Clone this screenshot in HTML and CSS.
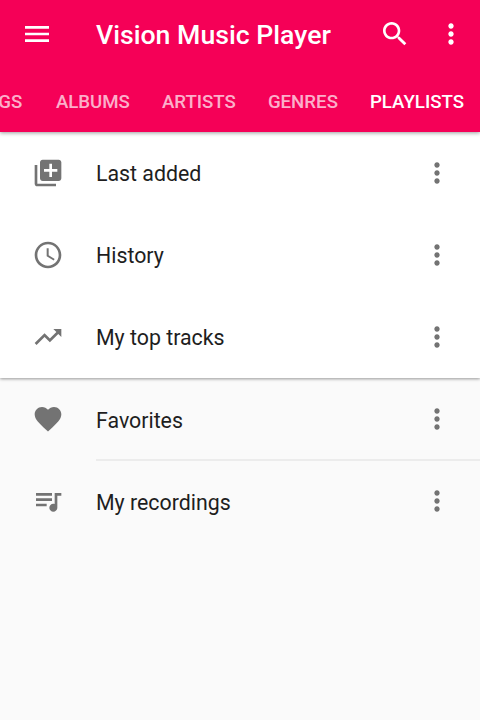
FILE: index.html
```html
<!DOCTYPE html>
<html lang="en">
  <head>
    <meta charset="UTF-8" />
    <meta name="viewport" content="width=device-width, initial-scale=1.0" />
    <title>Vision Music Player</title>
    <link rel="stylesheet" href="styles.css">
  </head>
  <body>
    <!-- menu dots, shared by every row -->
    <svg class="defs">
      <symbol id="more" viewBox="0 0 24 24">
        <path d="M12 8c1.1 0 2-.9 2-2s-.9-2-2-2-2 .9-2 2 .9 2 2 2zm0 2c-1.1 0-2 .9-2 2s.9 2 2 2 2-.9 2-2-.9-2-2-2zm0 6c-1.1 0-2 .9-2 2s.9 2 2 2 2-.9 2-2-.9-2-2-2z" />
      </symbol>
    </svg>

    <header class="header">
      <div class="toolbar">
        <svg class="icon menu" viewBox="0 0 24 24"><path d="M3 18h18v-2H3v2zm0-5h18v-2H3v2zm0-7v2h18V6H3z" /></svg>
        <h1 class="title">Vision Music Player</h1>
        <svg class="icon search" viewBox="0 0 24 24"><path d="M15.5 14h-.79l-.28-.27C15.41 12.59 16 11.11 16 9.5 16 5.91 13.09 3 9.5 3S3 5.91 3 9.5 5.91 16 9.5 16c1.61 0 3.09-.59 4.23-1.57l.27.28v.79l5 4.99L20.49 19l-4.99-5zm-6 0C7.01 14 5 11.99 5 9.5S7.01 5 9.5 5 14 7.01 14 9.5 11.99 14 9.5 14z" /></svg>
        <svg class="icon"><use href="#more" /></svg>
      </div>
      <nav class="tabs">
        <a class="tab songs">SONGS</a>
        <a class="tab">ALBUMS</a>
        <a class="tab">ARTISTS</a>
        <a class="tab">GENRES</a>
        <a class="tab active">PLAYLISTS</a>
      </nav>
    </header>

    <main>
      <ul class="list card">
        <li class="row">
          <svg class="icon" viewBox="0 0 24 24"><path d="M4 6H2v14c0 1.1.9 2 2 2h14v-2H4V6zm16-4H8c-1.1 0-2 .9-2 2v12c0 1.1.9 2 2 2h12c1.1 0 2-.9 2-2V4c0-1.1-.9-2-2-2zm-1 9h-4v4h-2v-4H9V9h4V5h2v4h4v2z" /></svg>
          <span class="name">Last added</span>
          <svg class="icon"><use href="#more" /></svg>
        </li>
        <li class="row">
          <svg class="icon" viewBox="0 0 24 24"><path d="M11.99 2C6.47 2 2 6.48 2 12s4.47 10 9.99 10C17.52 22 22 17.52 22 12S17.52 2 11.99 2zM12 20c-4.42 0-8-3.58-8-8s3.58-8 8-8 8 3.58 8 8-3.58 8-8 8zm.5-13H11v6l5.25 3.15.75-1.23-4.5-2.67z" /></svg>
          <span class="name">History</span>
          <svg class="icon"><use href="#more" /></svg>
        </li>
        <li class="row">
          <svg class="icon" viewBox="0 0 24 24"><path d="M16 6l2.29 2.29-4.88 4.88-4-4L2 16.59 3.41 18l6-6 4 4 6.3-6.29L22 12V6z" /></svg>
          <span class="name">My top tracks</span>
          <svg class="icon"><use href="#more" /></svg>
        </li>
      </ul>
      <ul class="list">
        <li class="row">
          <svg class="icon" viewBox="0 0 24 24"><path d="M12 21.35l-1.45-1.32C5.4 15.36 2 12.28 2 8.5 2 5.42 4.42 3 7.5 3c1.74 0 3.41.81 4.5 2.09C13.09 3.81 14.76 3 16.5 3 19.58 3 22 5.42 22 8.5c0 3.78-3.4 6.86-8.55 11.54L12 21.35z" /></svg>
          <span class="name">Favorites</span>
          <svg class="icon"><use href="#more" /></svg>
        </li>
        <li class="divider"></li>
        <li class="row">
          <svg class="icon" viewBox="0 0 24 24"><path d="M15 6H3v2h12V6zm0 4H3v2h12v-2zM3 16h8v-2H3v2zM17 6v8.18c-.31-.11-.65-.18-1-.18-1.66 0-3 1.34-3 3s1.34 3 3 3 3-1.34 3-3V8h3V6h-5z" /></svg>
          <span class="name">My recordings</span>
          <svg class="icon"><use href="#more" /></svg>
        </li>
      </ul>
    </main>
  </body>
</html>
```

FILE: styles.css
```css
* {
  box-sizing: border-box;
}

body {
  margin: 0;
  height: 100vh;
  overflow: hidden;
  background-color: #fafafa;
  color: #1e1e1e;
  font-family: Roboto, sans-serif;
}

.defs {
  display: none;
}

.icon {
  width: 32px;
  height: 32px;
  flex: none;
  fill: #737373;
}

/* sits above the list so its shadow shows */
.header {
  position: relative;
  z-index: 1;
  height: 131.5px;
  background-color: #f50057;
  color: #ffffff;
  box-shadow: 0 1px 4px rgba(0, 0, 0, 0.4);
}

.header .icon {
  fill: #ffffff;
}

.toolbar {
  display: flex;
  align-items: center;
  height: 68px;
  padding: 0 13.5px 0 21.3px;
}

.title {
  flex: 1;
  margin: 0 0 0 42.7px;
  padding-top: 2px;
  font-size: 26.67px;
  font-weight: 500;
}

.search {
  margin-right: 24px;
}

.tabs {
  display: flex;
  justify-content: flex-end;
  gap: 32px;
  padding: 2px 16px 0;
  line-height: 64px;
}

.tab {
  color: rgba(255, 255, 255, 0.7);
  font-size: 18.67px;
  font-weight: 500;
}

.tab.songs {
  margin-right: 1.5px;
}

.tab.active {
  color: #ffffff;
}

.list {
  margin: 0;
  padding: 0;
  list-style: none;
}

.card {
  background-color: #ffffff;
  box-shadow: 0 1px 3px rgba(0, 0, 0, 0.4);
}

.row {
  display: flex;
  align-items: center;
  height: 82.2px;
  padding: 0 26.7px 0 32px;
}

.name {
  flex: 1;
  margin-left: 32px;
  padding-top: 2px;
  font-size: 21.33px;
}

.divider {
  height: 2px;
  margin: -1px 0 -1px 96px;
  background-color: #ececec;
}
```
